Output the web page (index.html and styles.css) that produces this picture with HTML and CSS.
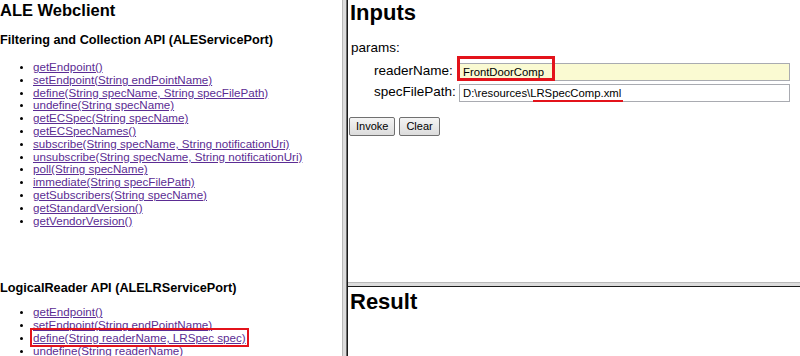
FILE: index.html
```html
<!DOCTYPE html>
<html>
<head>
<meta charset="utf-8">
<title>ALE Webclient</title>
<link rel="stylesheet" href="styles.css">
</head>
<body>
<div class="frameset">
  <div class="left">
    <h1 class="title">ALE Webclient</h1>
    <h2 class="api first-api">Filtering and Collection API (ALEServicePort)</h2>
    <ul class="methods first-list">
      <li><a href="#">getEndpoint()</a></li>
      <li><a href="#">setEndpoint(String endPointName)</a></li>
      <li><a href="#">define(String specName, String specFilePath)</a></li>
      <li><a href="#">undefine(String specName)</a></li>
      <li><a href="#">getECSpec(String specName)</a></li>
      <li><a href="#">getECSpecNames()</a></li>
      <li><a href="#">subscribe(String specName, String notificationUri)</a></li>
      <li><a href="#">unsubscribe(String specName, String notificationUri)</a></li>
      <li><a href="#">poll(String specName)</a></li>
      <li><a href="#">immediate(String specFilePath)</a></li>
      <li><a href="#">getSubscribers(String specName)</a></li>
      <li><a href="#">getStandardVersion()</a></li>
      <li><a href="#">getVendorVersion()</a></li>
    </ul>
    <h2 class="api second-api">LogicalReader API (ALELRServicePort)</h2>
    <ul class="methods second-list">
      <li><a href="#">getEndpoint()</a></li>
      <li><a href="#">setEndpoint(String endPointName)</a></li>
      <li><a href="#" class="marked">define(String readerName, LRSpec spec)</a></li>
      <li><a href="#">undefine(String readerName)</a></li>
    </ul>
  </div>
  <div class="vsplit"></div>
  <div class="right">
    <div class="inputs">
      <h1 class="frame-title">Inputs</h1>
      <div class="params">
        <div class="params-label">params:</div>
        <div class="param-grid">
          <label class="param-name">readerName:</label>
          <div class="field-wrap">
            <input class="field field-active" type="text" value="FrontDoorComp">
            <span class="mark-box"></span>
          </div>
          <label class="param-name">specFilePath:</label>
          <div class="field-wrap">
            <input class="field" type="text" value="D:\resources\LRSpecComp.xml">
            <span class="mark-line"></span>
          </div>
        </div>
      </div>
      <div class="actions">
        <button class="btn" type="button">Invoke</button>
        <button class="btn" type="button">Clear</button>
      </div>
    </div>
    <div class="hsplit"></div>
    <div class="result">
      <h1 class="frame-title result-title">Result</h1>
    </div>
  </div>
</div>
</body>
</html>
```

FILE: styles.css
```css
html, body {
  margin: 0;
  padding: 0;
  background: #fff;
}
body {
  font-family: "Liberation Sans", Arial, sans-serif;
  color: #000;
  width: 800px;
  height: 356px;
  overflow: hidden;
}
.frameset {
  display: flex;
  height: 356px;
  overflow: hidden;
}
.left {
  width: 342px;
  flex: none;
  overflow: hidden;
  height: 356px;
}
.title {
  font-size: 16.5px;
  line-height: 20px;
  font-weight: bold;
  margin: 0;
}
.api {
  font-size: 12.7px;
  line-height: 16px;
  font-weight: bold;
  margin: 0;
}
.first-api {
  margin-top: 12px;
}
.second-api {
  margin-top: 53px;
}
.methods {
  list-style: disc;
  margin: 0;
  padding-left: 33px;
  font-size: 11.6px;
  line-height: 12.8px;
}
.methods li::marker {
  font-size: 10px;
}
.first-list {
  margin-top: 13px;
}
.second-list {
  margin-top: 10px;
}
.methods a {
  color: #5b2c93;
  text-decoration: underline;
}
.methods a.marked {
  outline: 2px solid #e3131b;
  outline-offset: 1px;
}
.vsplit {
  width: 3px;
  flex: none;
  background: #dcdcdc;
  border-left: 1px solid #b8b8b8;
  border-right: 1px solid #6e6e6e;
}
.right {
  flex: 1;
  display: flex;
  flex-direction: column;
  border-left: 1px solid #1a1a1a;
  min-width: 0;
}
.inputs {
  height: 282px;
  flex: none;
  padding-left: 1px;
}
.frame-title {
  font-size: 22px;
  line-height: 26px;
  font-weight: bold;
  margin: 0;
  padding-left: 1px;
}
.params {
  margin-top: 14px;
  padding-left: 2px;
}
.params-label {
  font-size: 13.5px;
  line-height: 16px;
}
.param-grid {
  display: grid;
  grid-template-columns: 85px 331px;
  row-gap: 3px;
  margin-top: 6px;
  margin-left: 23px;
}
.param-name {
  font-size: 13.5px;
  line-height: 18px;
}
.field-wrap {
  position: relative;
  height: 18px;
}
.field {
  box-sizing: border-box;
  width: 331px;
  height: 18px;
  margin: 0;
  padding: 0 3px;
  border: 1px solid #a9abb1;
  font-family: "Liberation Sans", Arial, sans-serif;
  font-size: 11.3px;
  color: #000;
  background: #fff;
  outline: none;
}
.field-active {
  background: #fafad2;
}
.mark-box {
  position: absolute;
  left: -2px;
  top: -6px;
  width: 92px;
  height: 19px;
  border: 3px solid #e3131b;
}
.mark-line {
  position: absolute;
  left: 74px;
  top: 17px;
  width: 90px;
  height: 2px;
  background: #e3131b;
}
.actions {
  display: flex;
  gap: 4px;
  margin-top: 16px;
}
.btn {
  font-family: "Liberation Sans", Arial, sans-serif;
  font-size: 11px;
  height: 19px;
  line-height: 15px;
  padding: 0 6px;
  margin: 0;
  border: 1px solid #707070;
  border-radius: 2px;
  background: linear-gradient(#f4f4f4, #dcdcdc);
  color: #000;
}
.hsplit {
  height: 3px;
  flex: none;
  background: #dcdcdc;
  border-top: 1px solid #b8b8b8;
  border-bottom: 1px solid #1a1a1a;
}
.result {
  flex: 1;
  padding-left: 1px;
}
.result-title {
  margin-top: 2px;
}
```
